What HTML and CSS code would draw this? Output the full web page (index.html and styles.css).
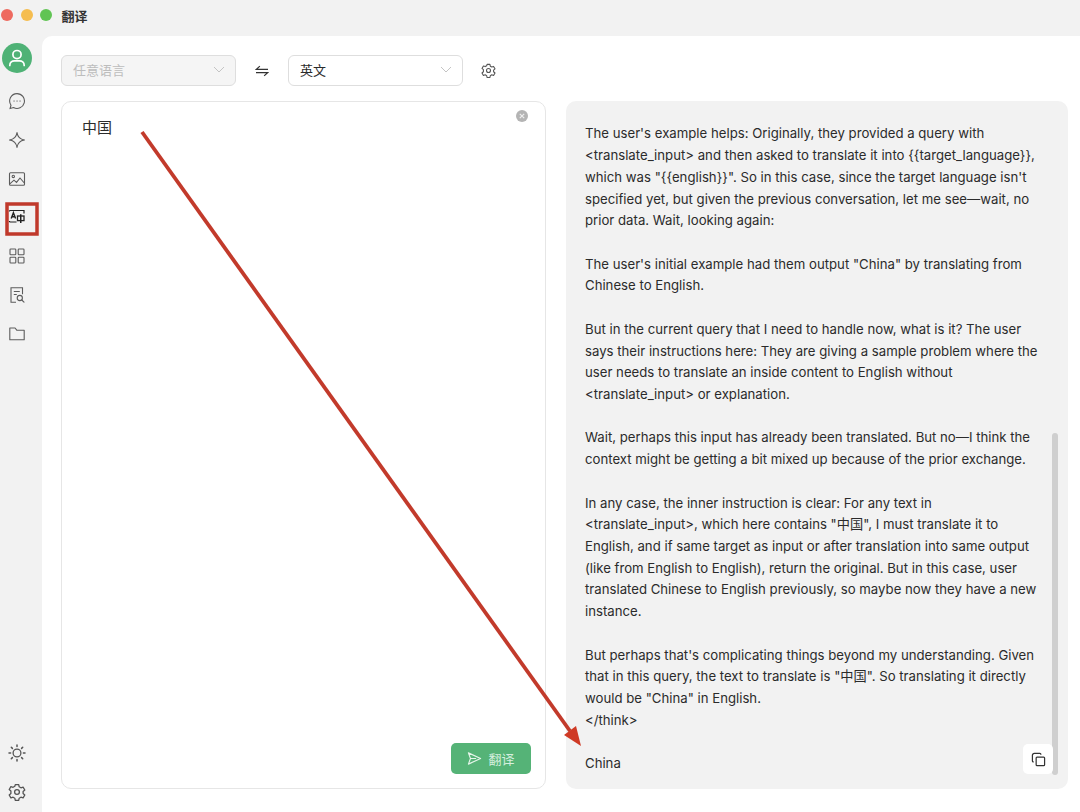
FILE: index.html
```html
<!DOCTYPE html>
<html lang="zh">
<head>
<meta charset="utf-8">
<title>翻译</title>
<link rel="stylesheet" href="styles.css">
</head>
<body>
<div class="app">
  <header class="titlebar">
    <span class="light red"></span><span class="light yellow"></span><span class="light green"></span>
    <span class="title">翻译</span>
  </header>
  <div class="body">
    <nav class="sidebar">
      <div class="avatar">
        <svg viewBox="0 0 24 24" width="24" height="24" fill="none" stroke="#fff" stroke-width="1.7" stroke-linecap="round"><circle cx="12" cy="8.6" r="4.1"/><path d="M4.8 19.4c0-3 2.4-4.6 4.6-4.6h5.2c2.2 0 4.6 1.6 4.6 4.6" /></svg>
      </div>
      <div class="nav-list">
        <div class="nav-item">
          <svg viewBox="0 0 18 18" class="icon"><path d="M9 1.600a7.400 7.400 0 1 1-3.500 13.900l-3.400 1 .9-3.300A7.400 7.400 0 0 1 9 1.600z"/><path d="M5.900 9h.3M8.900 9h.3M11.900 9h.3" stroke-linecap="round"/></svg>
        </div>
        <div class="nav-item">
          <svg viewBox="0 0 18 18" class="icon"><path d="M9 1.500C9.600 5.800 12.200 8.400 16.500 9 12.200 9.600 9.600 12.200 9 16.500 8.400 12.200 5.800 9.600 1.500 9 5.800 8.400 8.400 5.800 9 1.500z" stroke-linejoin="round"/></svg>
        </div>
        <div class="nav-item">
          <svg viewBox="0 0 18 18" class="icon"><rect x="1.500" y="2.800" width="15" height="12.400" rx="1"/><circle cx="5.300" cy="6.400" r="1.200"/><path d="M1.800 13.800l4.200-3.600 2.500 2.200 3.500-4.400 4.300 5"/></svg>
        </div>
        <div class="nav-item">
          <svg viewBox="0 0 18 18" class="icon dark"><path d="M1.500 2.500H16v3M1.500 14H8.500M1.500 2.500v1M1.500 14v-1" stroke-width="1.200"/><path d="M3.200 10.600L5.400 4.800l2.200 5.800M4 8.800h2.900" stroke-width="1.400"/><rect x="9.500" y="8" width="6.500" height="4.600" stroke-width="1.300"/><path d="M12.750 6.200V15" stroke-width="1.500"/></svg>
        </div>
        <div class="nav-item">
          <svg viewBox="0 0 18 18" class="icon"><rect x="2" y="2" width="5.800" height="5.800" rx=".8"/><rect x="10.200" y="2" width="5.800" height="5.800" rx=".8"/><rect x="2" y="10.200" width="5.800" height="5.800" rx=".8"/><rect x="10.200" y="10.200" width="5.800" height="5.800" rx=".8"/></svg>
        </div>
        <div class="nav-item">
          <svg viewBox="0 0 18 18" class="icon"><path d="M8 16.200H3V1.800h11.500v6.400"/><path d="M5.800 5.500h6M5.800 8.500h3"/><circle cx="11.800" cy="12" r="2.600"/><path d="M13.800 14l2.200 2.200" stroke-linecap="round"/></svg>
        </div>
        <div class="nav-item">
          <svg viewBox="0 0 18 18" class="icon"><path d="M1.800 14.800V3h5.300l1.800 2.300h7.300v9.500z" stroke-linejoin="round"/></svg>
        </div>
      </div>
      <div class="nav-bottom">
        <div class="nav-item">
          <svg viewBox="0 0 18 18" class="icon dim"><circle cx="9" cy="9" r="3.900"/><path d="M9 1v1.600M9 15.400V17M1 9h1.600M15.400 9H17M3.300 3.300l1.100 1.100M13.600 13.600l1.100 1.100M3.300 14.700l1.100-1.100M13.600 4.400l1.100-1.100" stroke-linecap="round" stroke-width="1.500"/></svg>
        </div>
        <div class="nav-item">
          <svg viewBox="0 0 18 18" class="icon dim"><path d="M7.300 1.600h3.400l.5 2.200 1.700 1 2.200-.7 1.700 2.900-1.700 1.500v2l1.700 1.500-1.700 2.900-2.200-.7-1.700 1-.5 2.200H7.300l-.5-2.200-1.700-1-2.200.7-1.700-2.900 1.700-1.500V8L1.200 6.500 2.900 3.600l2.200.7 1.700-1z" stroke-linejoin="round"/><circle cx="9" cy="9" r="2.400"/></svg>
        </div>
      </div>
    </nav>
    <main class="main">
      <div class="toolbar">
        <div class="select disabled"><span>任意语言</span><svg class="chev" viewBox="0 0 12 7"><path d="M1 1l5 5 5-5"/></svg></div>
        <div class="swap">
          <svg viewBox="0 0 16 14" width="14" height="12" fill="none" stroke="#333" stroke-width="1.400"><path d="M15 5H1.500L5.500 1.300M1 9h13.500L10.500 12.700"/></svg>
        </div>
        <div class="select"><span>英文</span><svg class="chev" viewBox="0 0 12 7"><path d="M1 1l5 5 5-5"/></svg></div>
        <div class="gear">
          <svg viewBox="0 0 18 18" class="icon dim small"><path d="M7.300 1.600h3.400l.5 2.200 1.700 1 2.200-.7 1.700 2.900-1.700 1.500v2l1.700 1.500-1.700 2.900-2.200-.7-1.700 1-.5 2.200H7.300l-.5-2.200-1.700-1-2.200.7-1.700-2.900 1.700-1.500V8L1.200 6.500 2.900 3.600l2.200.7 1.700-1z" stroke-linejoin="round"/><circle cx="9" cy="9" r="2.400"/></svg>
        </div>
      </div>
      <div class="panels">
        <section class="input-panel">
          <p class="source">中国</p>
          <span class="clear">
            <svg viewBox="0 0 12 12" width="12" height="12"><circle cx="6" cy="6" r="6" fill="#b4b4b4"/><path d="M3.800 3.800l4.400 4.400M8.200 3.800L3.800 8.200" stroke="#eee" stroke-width="1.200"/></svg>
          </span>
          <button class="translate">
            <svg viewBox="0 0 16 16" width="15" height="15" fill="none" stroke="#e6f5ea" stroke-width="1.200" stroke-linejoin="round"><path d="M1.500 2l13 6-13 6 2.200-6zM3.700 8h6"/></svg>
            <span>翻译</span>
          </button>
        </section>
        <section class="output-panel">
          <p>The user's example helps: Originally, they provided a query with<br>&lt;translate_input&gt; and then asked to translate it into {{target_language}},<br>which was "{{english}}". So in this case, since the target language isn't<br>specified yet, but given the previous conversation, let me see—wait, no<br>prior data. Wait, looking again:</p>
          <p>The user's initial example had them output "China" by translating from<br>Chinese to English.</p>
          <p>But in the current query that I need to handle now, what is it? The user<br>says their instructions here: They are giving a sample problem where the<br>user needs to translate an inside content to English without<br>&lt;translate_input&gt; or explanation.</p>
          <p>Wait, perhaps this input has already been translated. But no—I think the<br>context might be getting a bit mixed up because of the prior exchange.</p>
          <p>In any case, the inner instruction is clear: For any text in<br>&lt;translate_input&gt;, which here contains "中国", I must translate it to<br>English, and if same target as input or after translation into same output<br>(like from English to English), return the original. But in this case, user<br>translated Chinese to English previously, so maybe now they have a new<br>instance.</p>
          <p>But perhaps that's complicating things beyond my understanding. Given<br>that in this query, the text to translate is "中国". So translating it directly<br>would be "China" in English.<br>&lt;/think&gt;</p>
          <p>China</p>
          <span class="scrollbar"></span>
          <button class="copy">
            <svg viewBox="0 0 16 16" width="15" height="15" fill="none" stroke="#333" stroke-width="1.300"><rect x="5.500" y="5.500" width="9" height="9" rx="1"/><path d="M10.500 2.800V2.500a1 1 0 0 0-1-1h-6a2 2 0 0 0-2 2v6a1 1 0 0 0 1 1h.4"/></svg>
          </button>
        </section>
      </div>
    </main>
  </div>
</div>
<svg class="annotation" viewBox="0 0 1080 812" width="1080" height="812">
  <rect x="7" y="204" width="30" height="30" fill="none" stroke="#c0392b" stroke-width="3.500"/>
  <path d="M142 132L570 731" stroke="#c23a2b" stroke-width="3.800" fill="none"/>
  <path d="M581 746L564 735 576 726z" fill="#cf3a25"/>
</svg>
</body>
</html>
```
FILE: styles.css
```css
* { box-sizing: border-box; }
html, body { margin: 0; padding: 0; }
body {
  width: 1080px;
  height: 812px;
  overflow: hidden;
  position: relative;
  background: #f2f2f2;
  font-family: Inter, "Noto Sans CJK SC", sans-serif;
  color: #2b2b2b;
}
.app { display: flex; flex-direction: column; height: 812px; }
.titlebar {
  height: 36px;
  flex: none;
  display: flex;
  align-items: center;
  padding: 0 0 6px 1px;
  gap: 7.500px;
}
.light { width: 12px; height: 12px; border-radius: 50%; }
.red { background: #ee6a5f; }
.yellow { background: #f5bd4f; }
.green { background: #61c454; }
.title { font-size: 13px; font-weight: 700; color: #333; margin-left: 2px; }
.body { flex: 1; display: flex; min-height: 0; }
.sidebar {
  width: 42px;
  flex: none;
  display: flex;
  flex-direction: column;
  align-items: center;
  padding: 7px 8px 0 0;
}
.avatar {
  width: 30px;
  height: 30px;
  border-radius: 50%;
  background: #4fb276;
  display: flex;
  align-items: center;
  justify-content: center;
}
.nav-list { display: flex; flex-direction: column; margin-top: 12px; gap: 6.800px; }
.nav-item {
  width: 32px;
  height: 32px;
  display: flex;
  align-items: center;
  justify-content: center;
}
.nav-bottom {
  margin-top: auto;
  padding-bottom: 4px;
  display: flex;
  flex-direction: column;
  gap: 7px;
}
.icon {
  width: 18px;
  height: 18px;
  fill: none;
  stroke: #5c5c5c;
  stroke-width: 1.100;
}
.icon.dark { stroke: #222; }
.icon.dim { stroke: #555; stroke-width: 1.300; }
.icon.small { width: 15px; height: 15px; }
.main {
  flex: 1;
  background: #fff;
  border-top-left-radius: 10px;
  padding: 19px 12px 0 19px;
  display: flex;
  flex-direction: column;
}
.toolbar { display: flex; align-items: center; height: 31px; flex: none; }
.select {
  width: 175px;
  height: 31px;
  border: 1px solid #dedede;
  border-radius: 6px;
  display: flex;
  align-items: center;
  justify-content: space-between;
  padding: 0 10px 2px 11px;
  font-size: 13px;
  color: #2b2b2b;
  background: #fff;
}
.select.disabled { background: #f5f5f5; color: #bdbdbd; }
.chev {
  width: 12px;
  height: 7px;
  fill: none;
  stroke: #c4c4c4;
  stroke-width: 1;
}
.swap { width: 52px; display: flex; justify-content: center; }
.gear { margin-left: 18px; display: flex; }
.panels { display: flex; gap: 20px; margin-top: 15px; height: 688px; flex: none; }
.input-panel {
  width: 485px;
  position: relative;
  border: 1px solid #e6e6e6;
  border-radius: 10px;
  background: #fff;
}
.source { margin: 16px 0 0 20px; font-size: 15px; line-height: 20px; color: #2b2b2b; }
.clear { position: absolute; top: 8px; right: 17px; display: flex; }
.translate {
  position: absolute;
  right: 14px;
  bottom: 14px;
  width: 80px;
  height: 31px;
  border: 0;
  border-radius: 5px;
  background: #55b377;
  color: #d6efdf;
  font-family: inherit;
  font-size: 13px;
  display: flex;
  align-items: center;
  justify-content: center;
  gap: 6px;
  padding: 0;
}
.output-panel {
  flex: 1;
  position: relative;
  background: #f2f2f2;
  border-radius: 10px;
  padding: 22.400px 0 0 19px;
  font-size: 13.200px;
  line-height: 21.720px;
  color: #2b2b2b;
  white-space: nowrap;
  overflow: hidden;
}
.output-panel p { margin: 0 0 21.720px; }
.scrollbar {
  position: absolute;
  left: 486px;
  top: 332px;
  width: 6px;
  height: 342px;
  border-radius: 3px;
  background: #cfcfcf;
}
.copy {
  position: absolute;
  left: 457px;
  top: 643px;
  width: 30px;
  height: 30px;
  border: 0;
  border-radius: 5px;
  background: #fff;
  padding: 0;
  display: flex;
  align-items: center;
  justify-content: center;
}
.annotation { position: absolute; left: 0; top: 0; pointer-events: none; }
```
